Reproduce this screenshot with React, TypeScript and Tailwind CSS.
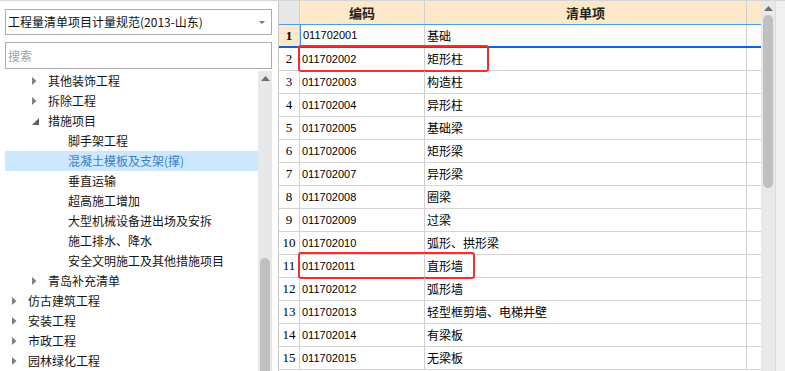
import React from "react";

const cjk = { fontFamily: '"Noto Sans CJK SC", "Noto Sans", sans-serif' };

type TreeItem = { label: string; level: number; arrow?: "closed" | "open"; selected?: boolean };

const tree: TreeItem[] = [
  { label: "其他装饰工程", level: 1, arrow: "closed" },
  { label: "拆除工程", level: 1, arrow: "closed" },
  { label: "措施项目", level: 1, arrow: "open" },
  { label: "脚手架工程", level: 2 },
  { label: "混凝土模板及支架(撑)", level: 2, selected: true },
  { label: "垂直运输", level: 2 },
  { label: "超高施工增加", level: 2 },
  { label: "大型机械设备进出场及安拆", level: 2 },
  { label: "施工排水、降水", level: 2 },
  { label: "安全文明施工及其他措施项目", level: 2 },
  { label: "青岛补充清单", level: 1, arrow: "closed" },
  { label: "仿古建筑工程", level: 0, arrow: "closed" },
  { label: "安装工程", level: 0, arrow: "closed" },
  { label: "市政工程", level: 0, arrow: "closed" },
  { label: "园林绿化工程", level: 0, arrow: "closed" },
];

const rows = [
  ["011702001", "基础"],
  ["011702002", "矩形柱"],
  ["011702003", "构造柱"],
  ["011702004", "异形柱"],
  ["011702005", "基础梁"],
  ["011702006", "矩形梁"],
  ["011702007", "异形梁"],
  ["011702008", "圈梁"],
  ["011702009", "过梁"],
  ["011702010", "弧形、拱形梁"],
  ["011702011", "直形墙"],
  ["011702012", "弧形墙"],
  ["011702013", "轻型框剪墙、电梯井壁"],
  ["011702014", "有梁板"],
  ["011702015", "无梁板"],
];

const Arrow = ({ kind }: { kind?: "closed" | "open" }) => {
  if (!kind) return <span className="w-[16px]" />;
  return (
    <span className="w-[16px] flex items-center">
      {kind === "closed" ? (
        <svg width="5" height="8" viewBox="0 0 5 8">
          <path d="M0 0 L4.5 4 L0 8 Z" fill="#808080" />
        </svg>
      ) : (
        <svg width="7" height="7" viewBox="0 0 7 7">
          <path d="M7 0 L7 7 L0 7 Z" fill="#606060" />
        </svg>
      )}
    </span>
  );
};

const ScrollUp = () => (
  <svg width="9" height="5" viewBox="0 0 9 5">
    <path d="M0 5 L4.5 0 L9 5 Z" fill="#6e6e6e" />
  </svg>
);

export default function App() {
  return (
    <div className="w-[785px] h-[371px] overflow-hidden bg-white flex border-t border-[#d6d6d6]" style={cjk}>
      {/* left panel */}
      <div className="w-[278px] shrink-0 flex flex-col pl-[5px] pr-[6px] pt-[8px]">
        <div className="h-[26px] border border-[#acacac] flex items-center pl-[2px] pr-[6px] text-[12px] text-[#111]">
          <span className="flex-1">工程量清单项目计量规范(2013-山东)</span>
          <svg width="6" height="3" viewBox="0 0 6 3">
            <path d="M0 0 L6 0 L3 3 Z" fill="#777" />
          </svg>
        </div>
        <div className="h-[27px] mt-[7px] border border-[#acacac] flex items-center pl-[2px] text-[12px] text-[#a0a0a0]">
          搜索
        </div>
        <div className="flex-1 flex mt-[2px] min-h-0">
          <div className="flex-1 flex flex-col">
            {tree.map((t) => (
              <div
                key={t.label}
                className={`h-[20px] shrink-0 flex items-center text-[12px] ${
                  t.selected ? "bg-[#cce8ff] text-[#3d7ec6]" : "text-[#151515]"
                }`}
              >
                <span style={{ width: 7 + t.level * 20 }} className="shrink-0" />
                <Arrow kind={t.arrow} />
                <span className="whitespace-nowrap">{t.label}</span>
              </div>
            ))}
          </div>
          <div className="w-[14px] bg-[#e8e8e8] flex flex-col items-center pt-[5px]">
            <ScrollUp />
            <div className="flex-1" />
            <div className="w-[10px] h-[118px] rounded-[5px] bg-[#c0c0c0] -mb-[5px]" />
          </div>
        </div>
      </div>

      {/* right grid */}
      <div className="flex-1 flex">
        <div className="w-[483px] border-l border-[#c8c8c8] flex flex-col">
          <div className="h-[24px] flex border-b border-[#4f9be8] text-[13px] font-bold text-[#222]">
            <div className="w-[21px] bg-[#e8e8e8] border-r border-[#d0d0d0]" />
            <div className="w-[125px] bg-[#fde8c9] border-r border-[#d0d0d0] flex items-center justify-center">编码</div>
            <div className="w-[322px] bg-[#fde8c9] border-r border-[#d0d0d0] flex items-center justify-center">清单项</div>
            <div className="flex-1 bg-[#fde8c9]" />
          </div>
          {rows.map(([code, name], i) => {
            const first = i === 0;
            const boxed = i === 1 || i === 10;
            return (
              <div
                key={code}
                className={`flex shrink-0 relative ${
                  first ? "h-[23px] border-b-2 border-[#0a64e8] bg-[#fcfcfc]" : "h-[23px] border-b border-[#d4d4d4]"
                }`}
              >
                <div
                  className={`w-[21px] border-r border-[#d0d0d0] flex items-center justify-center text-[13px] ${
                    first ? "bg-[#fde8c9] font-bold" : ""
                  }`}
                  style={{ fontFamily: '"Liberation Serif", serif' }}
                >
                  {i + 1}
                </div>
                <div
                  className={`w-[125px] border-r border-[#d0d0d0] flex items-center pl-[2px] text-[11px] text-black ${
                    first ? "border-l border-l-[#3b8ff0]" : ""
                  }`}
                  style={{ fontFamily: '"Liberation Sans", sans-serif' }}
                >
                  {code}
                </div>
                <div className="w-[322px] border-r border-[#d0d0d0] flex items-center pl-[2px] text-[12px] text-black">
                  {name}
                </div>
                <div className="flex-1" />
                {boxed && (
                  <div
                    className={`absolute top-[-3px] bottom-[-2px] left-[19px] border-2 border-[#ff2a2a] rounded-[3px] ${
                      i === 1 ? "w-[191px]" : "w-[177px]"
                    }`}
                  />
                )}
              </div>
            );
          })}
        </div>
        <div className="w-[14px] bg-[#e8e8e8] flex flex-col items-center pt-[5px]">
          <ScrollUp />
          <div className="w-[10px] h-[173px] rounded-[5px] bg-[#c0c0c0] mt-[4px]" />
        </div>
        <div className="flex-1 bg-[#f0f0f0] border-l border-[#dcdcdc]" />
      </div>
    </div>
  );
}
